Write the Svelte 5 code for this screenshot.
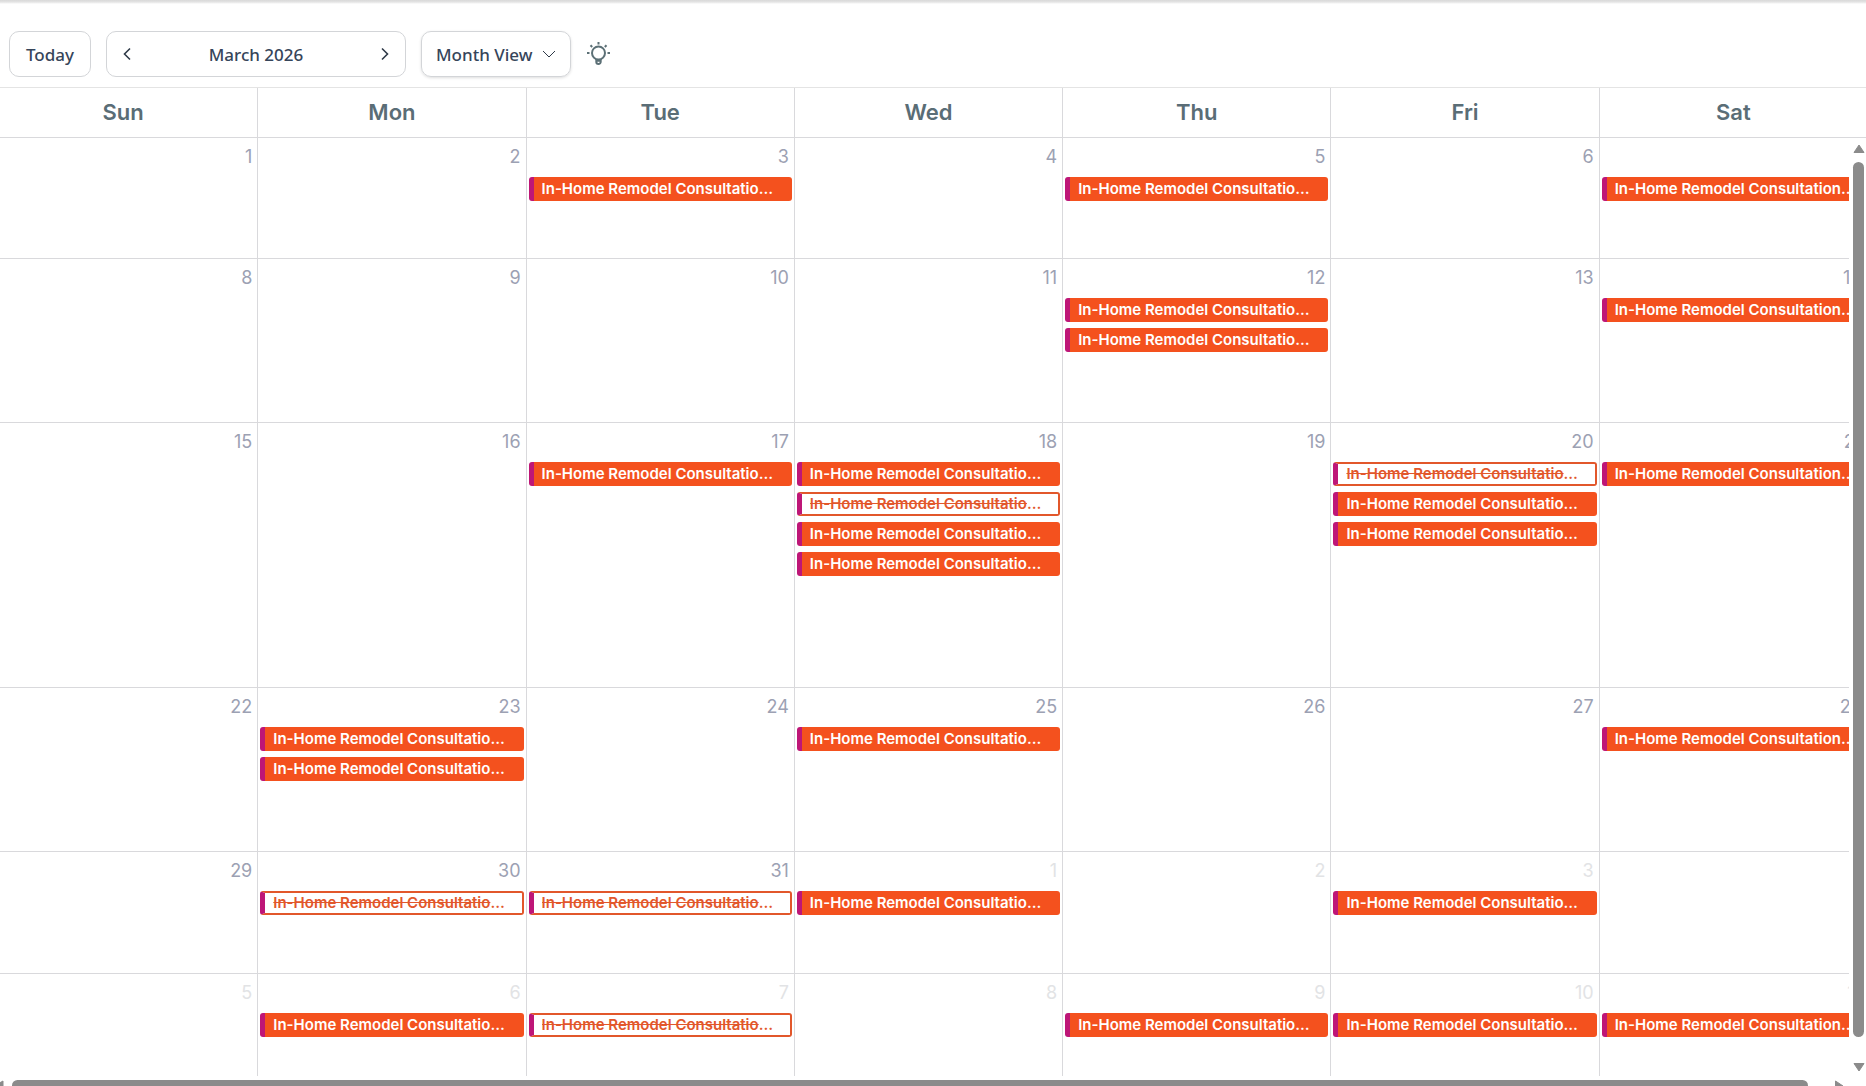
<script lang="ts">
    interface Day {
        date: number
        muted?: boolean
        events?: string[]
    }

    interface Week {
        height: number
        days: Day[]
    }

    const title = 'In-Home Remodel Consultation Visit'
    const weekdays = ['Sun', 'Mon', 'Tue', 'Wed', 'Thu', 'Fri', 'Sat']

    const weeks: Week[] = [
        { height: 121, days: [
            { date: 1 }, { date: 2 }, { date: 3, events: ['booked'] }, { date: 4 },
            { date: 5, events: ['booked'] }, { date: 6 }, { date: 7, events: ['booked'] },
        ] },
        { height: 164, days: [
            { date: 8 }, { date: 9 }, { date: 10 }, { date: 11 },
            { date: 12, events: ['booked', 'booked'] }, { date: 13 }, { date: 14, events: ['booked'] },
        ] },
        { height: 265, days: [
            { date: 15 }, { date: 16 }, { date: 17, events: ['booked'] },
            { date: 18, events: ['booked', 'cancelled', 'booked', 'booked'] }, { date: 19 },
            { date: 20, events: ['cancelled', 'booked', 'booked'] }, { date: 21, events: ['booked'] },
        ] },
        { height: 164, days: [
            { date: 22 }, { date: 23, events: ['booked', 'booked'] }, { date: 24 },
            { date: 25, events: ['booked'] }, { date: 26 }, { date: 27 }, { date: 28, events: ['booked'] },
        ] },
        { height: 122, days: [
            { date: 29 }, { date: 30, events: ['cancelled'] }, { date: 31, events: ['cancelled'] },
            { date: 1, muted: true, events: ['booked'] }, { date: 2, muted: true },
            { date: 3, muted: true, events: ['booked'] }, { date: 4, muted: true },
        ] },
        { height: 121, days: [
            { date: 5, muted: true }, { date: 6, muted: true, events: ['booked'] },
            { date: 7, muted: true, events: ['cancelled'] }, { date: 8, muted: true },
            { date: 9, muted: true, events: ['booked'] }, { date: 10, muted: true, events: ['booked'] },
            { date: 11, muted: true, events: ['booked'] },
        ] },
    ]
</script>

<div class="calendar">
    <header class="toolbar">
        <button class="btn" type="button">Today</button>
        <div class="period">
            <button type="button" aria-label="Previous month">
                <svg width="8" height="14" viewBox="0 0 8 14"><path d="M7 1.500 1.500 7 7 12.500" /></svg>
            </button>
            <span>March 2026</span>
            <button type="button" aria-label="Next month">
                <svg width="8" height="14" viewBox="0 0 8 14"><path d="M1 1.500 6.500 7 1 12.500" /></svg>
            </button>
        </div>
        <button class="btn view" type="button">
            Month View
            <svg width="14" height="8" viewBox="0 0 14 8"><path d="M1 1l6 6 6-6" /></svg>
        </button>
        <button class="tip" type="button" aria-label="Tips">
            <svg width="24" height="24" viewBox="0 0 24 24">
                <circle cx="12.500" cy="11" r="6.500" />
                <path d="M10.300 17v2.800a2.200 2.200 0 0 0 4.400 0V17M10.500 18.800h4M12.500 0v2.500M4.500 3.300l1.700 1.700M20.500 3.300l-1.700 1.700M1 11h2.500M21.500 11H24" />
            </svg>
        </button>
    </header>

    <div class="weekdays">
        {#each weekdays as name}
            <div>{name}</div>
        {/each}
    </div>

    <div class="body">
        <div class="viewport">
            {#each weeks as week}
                <div class="week" style:min-height={week.height + 'px'}>
                    {#each week.days as day}
                        <div class="day" class:muted={day.muted}>
                            <span class="date">{day.date}</span>
                            {#each day.events ?? [] as status}
                                <button class="event {status}" type="button"><span>{title}</span></button>
                            {/each}
                        </div>
                    {/each}
                </div>
            {/each}
        </div>
        <div class="vbar">
            <svg width="12" height="10" viewBox="0 0 12 10"><path d="M6 1 11 8.500H1z" /></svg>
            <div class="thumb"></div>
            <svg width="12" height="10" viewBox="0 0 12 10"><path d="M6 9 11 1.500H1z" /></svg>
        </div>
    </div>
    <div class="hbar">
        <svg width="4" height="12" viewBox="8 0 4 12"><path d="M2 6 11 1v10z" /></svg>
        <div class="thumb"></div>
        <svg width="10" height="12" viewBox="0 0 10 12"><path d="M9 6 1.500 1v10z" /></svg>
    </div>
</div>

<style>
    :global(body) {
        background: #fff;
    }

    .calendar, .calendar * {
        box-sizing: border-box;
    }

    .calendar {
        display: flex;
        flex-direction: column;
        height: 100vh;
        overflow: hidden;
        font-family: Inter, sans-serif;
        background: linear-gradient(#d9d9d9, #e4e4e4 2px, #fff 4px);
    }

    button {
        margin: 0;
        padding: 0;
        border: 0;
        background: none;
        font: inherit;
        color: inherit;
        cursor: pointer;
    }

    .toolbar {
        display: flex;
        align-items: center;
        gap: 15px;
        padding: 31px 9px 10px;
        border-bottom: 1px solid #e4e4e4;
        font: 500 17px "Noto Sans", sans-serif;
        color: #36455a;

        & svg {
            display: block;
            fill: none;
            stroke: #2f3a48;
            stroke-width: 1.6;
        }
    }

    .btn, .period {
        height: 46px;
        border: 1px solid #d3d5d8;
        border-radius: 10px;
    }

    .btn {
        padding: 0 16px;
    }

    .period {
        display: flex;
        align-items: center;
        justify-content: space-between;
        width: 300px;

        & button {
            padding: 14px 16px;
        }
    }

    .view {
        display: flex;
        align-items: center;
        gap: 10px;
        padding: 0 14px;
        box-shadow: 0 1px 3px #0002;

        & svg {
            stroke-width: 1;
        }
    }

    .tip svg {
        stroke: #5c7076;
        stroke-width: 2;
    }

    .weekdays, .week {
        display: grid;
        grid-template-columns: repeat(7, minmax(0, 1fr));
        margin-left: -11px;
    }

    .weekdays {
        margin-right: -1px;
        border-bottom: 1px solid #d9d9dc;
        font-size: 22px;
        font-weight: 600;
        line-height: 49px;
        text-align: center;
        color: #5a6d76;

        & div + div {
            border-left: 1px solid #d9d9dc;
        }
    }

    .body {
        display: flex;
        flex: 1;
        min-height: 0;
    }

    .viewport {
        flex: 1;
        min-width: 0;
        overflow: hidden;
    }

    .week {
        margin-right: -18px;
        border-bottom: 1px solid #d9d9dc;

        &:last-child {
            border-bottom: 0;
        }
    }

    .day {
        display: flex;
        flex-direction: column;
        gap: 6px;
        padding: 6px 2px 0;

        & + .day {
            border-left: 1px solid #d9d9dc;
        }
    }

    .date {
        margin-bottom: 2px;
        padding-right: 3px;
        font-size: 18px;
        line-height: 25px;
        text-align: right;
        color: #9ca1b3;
    }

    .muted .date {
        color: #e2e3e5;
    }

    .event {
        height: 24px;
        padding: 0 14px 0 8px;
        border-left: 5px solid #be1677;
        border-radius: 3px;
        background: #f4511e;
        font-size: 15px;
        font-weight: 600;
        text-align: left;
        color: #fff;

        & span {
            display: block;
            overflow: hidden;
            line-height: 20px;
            text-overflow: ellipsis;
            white-space: nowrap;
        }

        &.cancelled {
            border: 2px solid #e2572b;
            border-left: 5px solid #be1677;
            background: #fff;
            color: #e2572b;
            text-decoration: line-through;
        }
    }

    .day:last-child .event {
        padding-right: 6px;
    }

    .vbar {
        display: flex;
        flex-direction: column;
        align-items: center;
        gap: 8px;
        width: 17px;
        padding: 6px 2px 4px 4px;

        & .thumb {
            flex: 1;
            width: 11px;
            margin-bottom: 17px;
            border-radius: 6px;
            background: #8b8b8b;
        }
    }

    .hbar {
        display: flex;
        gap: 8px;
        height: 10px;
        padding: 4px 22px 0 0;
        overflow: hidden;

        & .thumb {
            flex: 1;
            height: 11px;
            margin-right: 18px;
            border-radius: 6px;
            background: #8b8b8b;
        }
    }

    .vbar svg, .hbar svg {
        flex: none;
        fill: #8b8b8b;
        stroke: #8b8b8b;
        stroke-linejoin: round;
    }
</style>
